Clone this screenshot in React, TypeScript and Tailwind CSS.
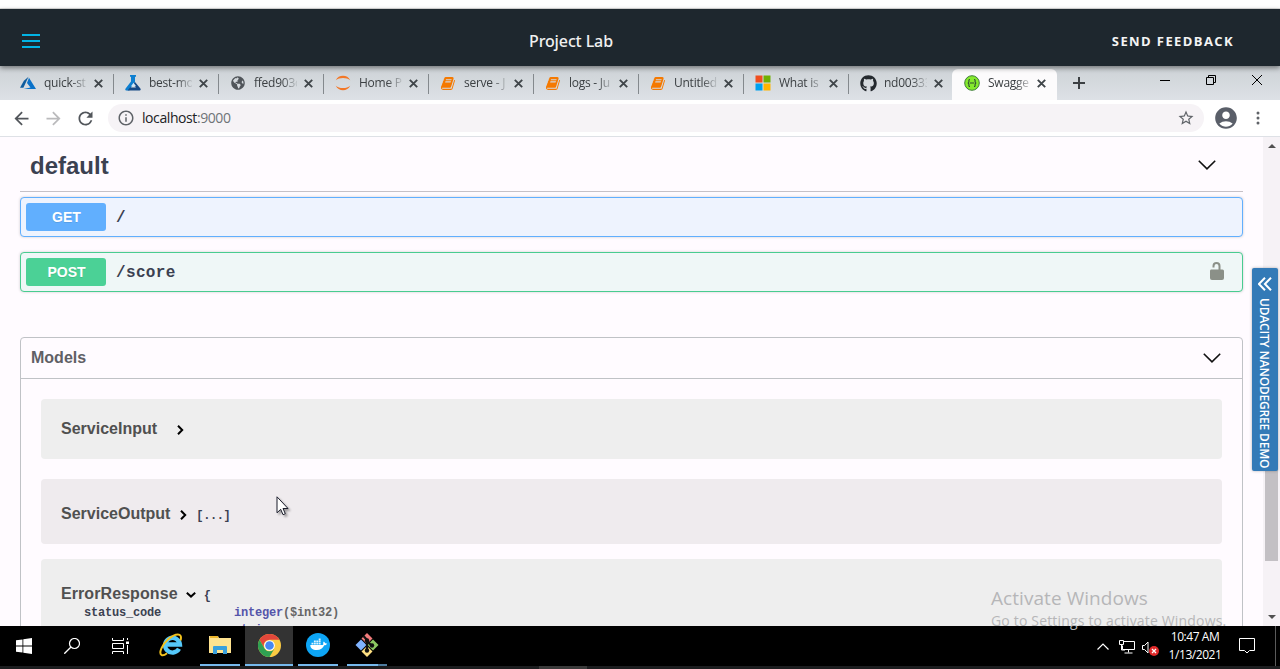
import type { ReactNode } from "react";
import { FaGithub, FaGlobeAmericas } from "react-icons/fa";
import { MdStarBorder, MdAccountCircle, MdInfoOutline, MdRefresh, MdArrowBack, MdArrowForward } from "react-icons/md";

const BOOK =
  "M1639 478q40 57 18 129l-275 906q-19 64-76.5 107.5t-122.5 43.5h-923q-77 0-148.5-53.5t-99.5-131.5q-24-67-2-127 0-4 3-27t4-37q1-8-3-21.5t-3-19.5q2-11 8-21t16.5-23.5 16.5-23.5q23-38 45-91.5t30-91.5q3-10 .5-30t-.5-28q3-11 17-28t17-23q21-36 42-92t25-90q1-9-2.5-32t.5-28q4-13 22-30.5t22-22.5q19-26 42.5-84.5t27.5-96.5q1-8-3-25.5t-2-26.5q2-8 9-18t18-23 17-21q8-12 16.5-30.5t15-35 16-36 19.5-32 26.5-23.5 36-11.5 47.5 5.5l-1 3q38-9 51-9h761q74 0 114 56t18 130l-274 906q-36 119-71.5 153.5t-128.5 34.5h-869q-27 0-38 15-11 16-1 43 24 70 144 70h923q29 0 56-15.5t35-41.5l300-987q7-22 5-57 38 15 59 43zm-1064 2q-4 13 2 22.5t20 9.5h608q13 0 25.5-9.5t16.5-22.5l21-64q4-13-2-22.5t-20-9.5h-608q-13 0-25.5 9.5t-16.5 22.5zm-83 256q-4 13 2 22.5t20 9.5h608q13 0 25.5-9.5t16.5-22.5l21-64q4-13-2-22.5t-20-9.5h-608q-13 0-25.5 9.5t-16.5 22.5z";

const Azure = () => (
  <svg viewBox="0 0 16 16" className="h-4 w-4">
    <path d="M8.500 1.800 3.900 5.700 0 12.800h3.400z" fill="#0f5d9e" />
    <path d="M9 2.700 7 8l3.500 4.600-6.900 1.300H16z" fill="#0a72c9" />
  </svg>
);

const Flask = () => (
  <svg viewBox="0 0 16 16" className="h-4 w-4">
    <path d="M5 0h6v1.800H10v5.400L7 11l-2.600 4.500H1.200C.2 15.500 0 14.500.6 13.500L6 6.500V1.800H5z" fill="#0d7fd0" />
    <path d="M8 9.500 10 7l5.400 6.500c.6 1 .2 2-.8 2H2.500l2.500-3h6z" fill="#164a86" />
    <path d="M6 11.300 8.500 7.800l2.600 3.500z" fill="#cfe6f5" />
  </svg>
);

const Jupyter = () => (
  <svg viewBox="0 0 16 16" className="h-4 w-4">
    <path d="M.8 5.200C2.200 2.200 4.900.8 8 .8s5.800 1.400 7.200 4.400C13.400 3.600 10.900 2.900 8 2.900s-5.400.7-7.200 2.300z" fill="#f37726" />
    <path d="M.8 10.800c1.400 3 4.100 4.400 7.200 4.400s5.800-1.400 7.200-4.400c-1.800 1.600-4.300 2.300-7.200 2.300s-5.400-.7-7.200-2.300z" fill="#f37726" />
  </svg>
);

const Book = () => (
  <svg viewBox="0 0 1792 1792" className="h-[15px] w-[15px]">
    <path d={BOOK} fill="#f57900" />
  </svg>
);

const MsLogo = () => (
  <svg viewBox="0 0 16 16" className="h-4 w-4">
    <path d="M.5.5h7v7h-7z" fill="#f04e1f" />
    <path d="M8.500.5h7v7h-7z" fill="#71b000" />
    <path d="M.5 8.500h7v7h-7z" fill="#00a1ef" />
    <path d="M8.500 8.500h7v7h-7z" fill="#ffb400" />
  </svg>
);

const Swagger = () => (
  <svg viewBox="0 0 16 16" className="h-4 w-4">
    <circle cx="8" cy="8" r="7.300" fill="#85ea2d" stroke="#3f7f3a" strokeWidth="1" />
    <path d="M6 4.500c-1.600 0-1 1.500-1.100 2.500-.1.700-.6 1-1.200 1 .6 0 1.100.3 1.200 1 .1 1-.5 2.500 1.100 2.500M10 4.500c1.600 0 1 1.500 1.100 2.500.1.700.6 1 1.200 1-.6 0-1.100.3-1.200 1-.1 1 .5 2.500-1.100 2.500M6 8h4" fill="none" stroke="#2c4a33" strokeWidth="1.100" />
  </svg>
);

const tabs: { title: string; icon: ReactNode }[] = [
  { title: "quick-st", icon: <Azure /> },
  { title: "best-mo", icon: <Flask /> },
  { title: "ffed903c", icon: <FaGlobeAmericas className="h-[14px] w-[14px] shrink-0 text-[#50555a]" /> },
  { title: "Home P", icon: <Jupyter /> },
  { title: "serve - J", icon: <Book /> },
  { title: "logs - Ju", icon: <Book /> },
  { title: "Untitled", icon: <Book /> },
  { title: "What is", icon: <MsLogo /> },
  { title: "nd00333", icon: <FaGithub className="h-[17px] w-[17px] shrink-0 text-[#24292e]" /> },
  { title: "Swagge", icon: <Swagger /> },
];

function Tab({ title, icon, index }: { title: string; icon: ReactNode; index: number }) {
  const active = index === 9;
  return (
    <div
      className={
        "flex h-[31px] w-[105px] shrink-0 items-center pb-[3px] " +
        (active ? "-ml-px rounded-t-md bg-[#fcfbfc]" : "")
      }
    >
      <div className={"mt-[2px] h-5 w-px " + (index > 0 && !active ? "bg-[#84898d]" : "")} />
      <div className="ml-[11px] flex w-4 shrink-0 justify-center">{icon}</div>
      <div className="ml-2 w-[43px] whitespace-nowrap text-[12px] leading-4 tracking-[-0.25px] text-[#3c4043] [mask-image:linear-gradient(to_right,black_65%,transparent_105%)]">
        {title}
      </div>
      <svg viewBox="0 0 9 9" className={"h-[9px] w-[9px] " + (active ? "ml-[6px]" : "ml-[7px]")}>
        <path d="M.8.8l7.400 7.400M8.200.8.8 8.200" stroke="#3f4549" strokeWidth="1.900" />
      </svg>
    </div>
  );
}

function Chevron() {
  return (
    <svg viewBox="0 0 18 10" className="h-[10px] w-[18px]">
      <path d="M.8.8 9 8.800 17.200.8" fill="none" stroke="#111" strokeWidth="1.600" />
    </svg>
  );
}

function Small({ down }: { down?: boolean }) {
  return down ? (
    <svg viewBox="0 0 10 6" className="h-[6px] w-[10px]">
      <path d="M.8.8 5 4.600 9.200.8" fill="none" stroke="#000" strokeWidth="2" />
    </svg>
  ) : (
    <svg viewBox="0 0 7 10" className="h-[10px] w-[7px]">
      <path d="M1 .8 5.200 5 1 9.200" fill="none" stroke="#000" strokeWidth="2" />
    </svg>
  );
}

export default function App() {
  return (
    <div className="relative flex h-[669px] w-[1280px] flex-col overflow-hidden bg-white font-['Open_Sans','Noto_Sans',sans-serif]">
      <div className="h-[9px] shrink-0 border-b border-[#dcdcdc] bg-white" />
      <header className="relative z-10 flex h-[57px] shrink-0 items-center bg-[#1e272e] pt-[7px] shadow-[0_2px_5px_rgba(0,0,0,0.45)]">
        <svg viewBox="0 0 18 14" className="ml-[22px] h-[14px] w-[18px]">
          <path d="M0 1h18M0 7h18M0 13h18" stroke="#02b3e4" strokeWidth="2" />
        </svg>
        <div className="ml-[489px] w-[90px] whitespace-nowrap font-['Noto_Sans','Open_Sans',sans-serif] text-[16px] font-medium leading-5 tracking-[-0.12px] text-[#f0f0f0]">Project Lab</div>
        <div className="ml-auto mr-[46px] whitespace-nowrap text-[13px] font-bold leading-5 tracking-[1.4px] text-[#f4f4f4]">SEND FEEDBACK</div>
      </header>

      <div className="flex h-[34px] shrink-0 items-end bg-linear-to-b from-[#cdd2d6] to-[#dde1e6] pl-2">
        {tabs.map((t, i) => (
          <Tab key={t.title} title={t.title} icon={t.icon} index={i} />
        ))}
        <svg viewBox="0 0 12 12" className="mb-[11px] ml-4 h-3 w-3">
          <path d="M6 0v12M0 6h12" stroke="#3c4043" strokeWidth="2" />
        </svg>
        <div className="mb-[15px] ml-auto mr-[18px] flex items-center">
          <svg viewBox="0 0 10 10" className="h-[10px] w-[10px]"><path d="M0 5.500h10" stroke="#000" /></svg>
          <svg viewBox="0 0 10 10" className="ml-9 h-[10px] w-[10px]">
            <path d="M.5 2.500h7v7h-7zM2.500 2.500v-2h7v7h-2" fill="none" stroke="#000" />
          </svg>
          <svg viewBox="0 0 10 10" className="ml-9 h-[10px] w-[10px]"><path d="M0 0l10 10M10 0 0 10" stroke="#000" /></svg>
        </div>
      </div>

      <div className="flex h-[37px] shrink-0 items-center border-b border-[#dee1e6] bg-white">
        <MdArrowBack className="ml-[11px] h-[21px] w-[21px] text-[#52565b]" />
        <MdArrowForward className="ml-[11px] h-[21px] w-[21px] text-[#bababc]" />
        <MdRefresh className="ml-[11px] h-[21px] w-[21px] text-[#52565b]" />
        <div className="ml-3 flex h-7 w-[1096px] items-center rounded-full bg-[#f6f3f6] pl-[9px] pr-[9px]">
          <MdInfoOutline className="h-[18px] w-[18px] text-[#5f6368]" />
          <div className="ml-[7px] text-[14px] leading-5 tracking-[-0.42px] text-[#202124]">
            localhost<span className="text-[#6f7378]">:9000</span>
          </div>
          <MdStarBorder className="ml-auto h-[18px] w-[18px] text-[#5f6368]" />
        </div>
        <MdAccountCircle className="ml-[9px] h-[26px] w-[26px] text-[#5a5f69]" />
        <svg viewBox="0 0 4 14" className="ml-[17px] h-[14px] w-1">
          <circle cx="2" cy="2" r="1.500" fill="#5f6368" /><circle cx="2" cy="7" r="1.500" fill="#5f6368" /><circle cx="2" cy="12" r="1.500" fill="#5f6368" />
        </svg>
      </div>

      <div className="flex h-[489px] shrink-0 overflow-hidden bg-[#fffbff] font-['Liberation_Sans',Arial,sans-serif]">
        <main className="ml-5 w-[1223px] shrink-0">
          <div className="flex h-[55px] items-center justify-between border-b border-[#c5c1c7] pb-px pl-[10px] pr-[27px] pt-1">
            <h2 className="text-[24px] font-bold leading-7 text-[#3b4151]">default</h2>
            <span className="mb-[2px]"><Chevron /></span>
          </div>
          <div className="mt-[5px] flex h-10 items-center rounded border border-[#61affe] bg-[#eef3fe] pl-[5px] shadow-[0_0_3px_rgba(0,0,0,0.19)]">
            <span className="flex h-7 w-20 items-center justify-center rounded-[3px] bg-[#61affe] pl-px text-[14px] font-bold text-white [text-shadow:0_1px_0_rgba(0,0,0,0.1)]">GET</span>
            <span className="ml-[10px] mt-[2px] font-['Liberation_Mono',monospace] text-[16px] font-bold text-[#3b4151]">/</span>
          </div>
          <div className="mt-[15px] flex h-10 items-center rounded border border-[#49cc90] bg-[#eff7f7] pl-[5px] pr-[17px] shadow-[0_0_3px_rgba(0,0,0,0.19)]">
            <span className="flex h-7 w-20 items-center justify-center rounded-[3px] bg-[#4bd196] pl-px text-[14px] font-bold text-white [text-shadow:0_1px_0_rgba(0,0,0,0.1)]">POST</span>
            <span className="ml-[10px] mt-px font-['Liberation_Mono',monospace] text-[16px] font-bold tracking-[0.35px] text-[#3b4151]">/score</span>
            <svg viewBox="0 0 16 18" className="mb-[3px] ml-auto h-[18px] w-4">
              <path d="M4.500 5.500V4a3 3 0 0 1 6 0v4" fill="none" stroke="#8b9088" strokeWidth="2" />
              <path d="M2 7.500h11.500q1.500 0 1.500 1.500v7q0 2-2 2H3q-2 0-2-2V9q0-1.500 1-1.500z" fill="#8b9088" />
            </svg>
          </div>
          <section className="mt-[45px] h-[400px] rounded-t border border-[#c0c2c6]">
            <div className="flex h-[41px] items-center justify-between border-b border-[#c0c2c6] pl-[10px] pr-[21px]">
              <h3 className="text-[16px] font-bold text-[#606065]">Models</h3>
              <Chevron />
            </div>
            <div className="flex flex-col px-5 pt-5 text-[16px] font-bold text-[#505050]">
              <div className="flex h-[60px] items-center rounded bg-[#eeeeee] pl-5">
                <span>ServiceInput</span>
                <span className="ml-5 mt-[2px]"><Small /></span>
              </div>
              <div className="mt-5 flex h-[65px] items-center rounded bg-[#efebee] pl-5 pt-1">
                <span>ServiceOutput</span>
                <span className="ml-[10px] mt-[2px]"><Small /></span>
                <span className="ml-[9px] mt-1 font-['Liberation_Mono',monospace] text-[12px] leading-4 tracking-[-0.4px] text-[#3b4151]">[...]</span>
              </div>
              <div className="mt-[15px] h-[120px] rounded bg-[#eeeeee] pl-5 pt-[25px]">
                <div className="flex h-5 items-center">
                  <span className="tracking-[0.08px]">ErrorResponse</span>
                  <span className="ml-2 mt-[2px]"><Small down /></span>
                  <span className="ml-2 mt-1 font-['Liberation_Mono',monospace] text-[12px] leading-4 text-[#3b4151]">{"{"}</span>
                </div>
                <div className="grid grid-cols-[150px_1fr] pl-[23px] pt-px font-['Liberation_Mono',monospace] text-[12px] leading-[17px] tracking-[-0.2px] text-[#3b4151]">
                  <span>status_code</span>
                  <span className="text-[#5555aa]">integer<span className="text-[#666]">($int32)</span></span>
                  <span />
                  <span className="text-[#5555aa]">string</span>
                </div>
              </div>
            </div>
          </section>
        </main>
        <div className="ml-5 flex w-[17px] shrink-0 flex-col items-center bg-[#f6f2f6]">
          <svg viewBox="0 0 8 4" className="mt-[7px] h-1 w-2"><path d="M0 4 4 0l4 4z" fill="#505050" /></svg>
          <div className="mt-[152px] h-[261px] w-[13px] bg-[#c3c0c4]" />
          <svg viewBox="0 0 8 4" className="mb-[7px] mt-auto h-1 w-2"><path d="M0 0l4 4 4-4z" fill="#505050" /></svg>
        </div>
      </div>

      <footer className="flex h-10 shrink-0 items-stretch bg-black">
        <div className="flex w-12 items-center justify-center">
          <svg viewBox="0 0 16 16" className="h-4 w-4">
            <path d="M0 2.300 6.500 1.400v6.200H0zM7.300 1.300 16 0v7.600H7.300zM0 8.400h6.500v6.200L0 13.700zM7.300 8.400H16V16l-8.700-1.200z" fill="#fff" />
          </svg>
        </div>
        <div className="flex w-12 items-center justify-center">
          <svg viewBox="0 0 16 16" className="h-4 w-4">
            <circle cx="10.500" cy="5.500" r="5" fill="none" stroke="#fff" strokeWidth="1.200" />
            <path d="M7 9 .3 15.700" stroke="#fff" strokeWidth="1.300" />
          </svg>
        </div>
        <div className="flex w-12 items-center justify-center">
          <svg viewBox="0 0 17 16" className="h-4 w-[17px]">
            <path d="M.5 0v2.500h11V0M.5 16v-2.500h11V16M.5 5.500h11v5H.5zM15.500 0v2M15.500 7v9" fill="none" stroke="#fff" />
            <path d="M14 3.500h3v2.500h-3z" fill="#fff" />
          </svg>
        </div>
        <div className="flex w-[54px] items-center justify-center pb-[2px]">
          <svg viewBox="0 0 24 24" className="h-6 w-6">
            <path d="M20 15.800a7.400 7.400 0 1 1 .9-4.300H7" fill="none" stroke="#55c9fa" strokeWidth="4.400" />
            <path d="M21.500 7.500C24-1 16 .5 9.500 6 3 11.500-.5 20 2.500 22c1.500 1 4-.5 5.500-1.700" fill="none" stroke="#f2c21e" strokeWidth="2" />
          </svg>
        </div>
        <div className="ml-[2px] flex w-10 items-center justify-center border-b-2 border-[#76b9ed]">
          <svg viewBox="0 0 22 20" className="h-5 w-[22px]">
            <path d="M0 1h9l1 2h12v15H0z" fill="#ffe38f" />
            <path d="M1 1h8v2H1z" fill="#eeb72d" />
            <path d="M4 19v-7q0-1 1-1h12q1 0 1 1v7h-4v-4H8v4z" fill="#3aa0dc" />
          </svg>
        </div>
        <div className="ml-[5px] flex w-12 items-center justify-center border-b-2 border-[#76b9ed] bg-[#333333]">
          <svg viewBox="0 0 24 24" className="h-[23px] w-[23px]">
            <circle cx="12" cy="12" r="12" fill="#fbcb43" />
            <path d="M1.600 6A12 12 0 0 1 22.400 6H12a6 6 0 0 0-5.200 9z" fill="#e2473b" />
            <path d="M1.600 6A12 12 0 0 0 12 24l5.200-9A6 6 0 0 1 6.800 15z" fill="#2fa052" />
            <circle cx="12" cy="12" r="5.600" fill="#fff" />
            <circle cx="12" cy="12" r="4.500" fill="#4688f1" />
          </svg>
        </div>
        <div className="ml-[5px] flex w-10 items-center justify-center border-b-2 border-[#76b9ed]">
          <svg viewBox="0 0 24 24" className="h-6 w-6">
            <circle cx="12" cy="12" r="12" fill="#0da5f5" />
            <path d="M4.300 12h12.200c.8-.2 1-.5.8-1.300-.3-.9 0-1.700.6-2.300.8.600 1.100 1.200 1.200 1.900.7-.1 1.300 0 1.800.4-.5 1.100-1.400 1.500-2.700 1.500-1.300 3.200-3.700 4.800-7.500 4.800-4 0-6.300-1.700-6.400-5z" fill="#fff" />
            <path d="M5.500 9.700h1.900v1.800H5.500zM7.900 9.700h1.900v1.800H7.900zM10.300 9.700h1.900v1.800h-1.900zM12.700 9.700h1.900v1.800h-1.900zM7.900 7.600h1.900v1.700H7.900zM10.300 7.600h1.900v1.700h-1.900zM12.700 7.600h1.900v1.700h-1.900zM12.700 5.600h1.900v1.600h-1.900z" fill="#e3f4fd" />
          </svg>
        </div>
        <div className="ml-[9px] flex w-[31px] items-center border-b-2 border-[#76b9ed]">
          <svg viewBox="0 0 24 24" className="ml-2 h-6 w-6 shrink-0">
            <path d="M12 0l5.500 5.500L12 11 6.500 5.500z" fill="#f27b7b" />
            <path d="M6 6.500l5.500 5.500L6 17.500.5 12z" fill="#80b3ff" />
            <path d="M18 6.500l5.500 5.500-5.500 5.500-5.500-5.500z" fill="#8dc963" />
            <path d="M12 13l5.500 5.500L12 24l-5.500-5.500z" fill="#ffe082" />
            <path d="M8.500 3l3.500 4v11M12 8l5 5" stroke="#111" strokeWidth="2.200" fill="none" />
            <circle cx="12" cy="7.500" r="2.200" fill="#111" /><circle cx="12" cy="17.500" r="2.200" fill="#111" /><circle cx="17" cy="12.500" r="2.200" fill="#111" />
          </svg>
        </div>
        <div className="w-[9px] border-b-2 border-[#4e7c9f]" />
        <div className="ml-auto flex items-center">
          <svg viewBox="0 0 12 7" className="h-[7px] w-3"><path d="M.5 6.500 6 1l5.500 5.500" fill="none" stroke="#fff" strokeWidth="1.200" /></svg>
          <svg viewBox="0 0 16 14" className="ml-[10px] mt-[2px] h-[14px] w-4">
            <path d="M5 1.500h10.500v8H3.500v-4M9.500 9.500v3M5.500 13h8M.5.5h4v4h-4zM2.500 5v5H6" fill="none" stroke="#fff" />
          </svg>
          <svg viewBox="0 0 17 15" className="ml-[7px] mt-1 h-[15px] w-[17px]">
            <path d="M.5 4.500h2L6 1v11L2.500 8.500h-2z" fill="none" stroke="#fff" />
            <circle cx="12" cy="10" r="5" fill="#e02a2a" />
            <path d="M10 8l4 4M14 8l-4 4" stroke="#fff" strokeWidth="1.300" />
          </svg>
          <div className="ml-2 w-[56px] text-center text-[12px] leading-[18px] tracking-[-0.45px] text-white">
            <div className="whitespace-nowrap">10:47 AM</div>
            <div className="whitespace-nowrap">1/13/2021</div>
          </div>
          <svg viewBox="0 0 16 16" className="ml-[16px] mr-5 h-4 w-4">
            <path d="M.5.5h15v12h-5L8 15l-2.500-2.500h-5z" fill="none" stroke="#fff" />
          </svg>
        </div>
        <div className="mr-[4px] w-px bg-[#5a5a5a]" />
      </footer>
      <div className="flex h-[3px] shrink-0 bg-[#1c1d1f] pl-[539px]">
        <div className="w-12 bg-[#3a3a3a]" />
      </div>

      <div className="pointer-events-none absolute left-[991px] top-[586px] whitespace-nowrap text-[#b6b6b8]">
        <div className="text-[19px] leading-6 tracking-[0.06px]">Activate Windows</div>
        <div className="text-[14px] leading-[21px] tracking-[0.17px]">Go to Settings to activate Windows.</div>
      </div>

      <div className="absolute left-[1252px] top-[268px] flex h-[203px] w-[26px] flex-col items-center rounded-xs bg-[#337ab7] shadow-[0_0_3px_rgba(0,0,0,0.3)]">
        <svg viewBox="0 0 14 14" className="mt-[9px] h-[14px] w-[14px] shrink-0">
          <path d="M7 .8.9 7 7 13.200M13 .8 6.900 7l6.100 6.200" fill="none" stroke="#fff" strokeWidth="2" />
        </svg>
        <div className="mr-[2px] mt-[7px] whitespace-nowrap text-[12px] font-semibold leading-4 tracking-[-0.18px] text-white [writing-mode:vertical-rl]">UDACITY NANODEGREE DEMO</div>
      </div>

      <svg viewBox="0 0 14 21" className="absolute left-[276px] top-[496px] h-[21px] w-[14px] drop-shadow-[2px_2px_1px_rgba(0,0,0,0.35)]">
        <path d="M1 .8v16l3.700-3.500 2.300 5.400 2.300-1-2.300-5.200h5z" fill="#fff" stroke="#1b1d2b" />
      </svg>
    </div>
  );
}
